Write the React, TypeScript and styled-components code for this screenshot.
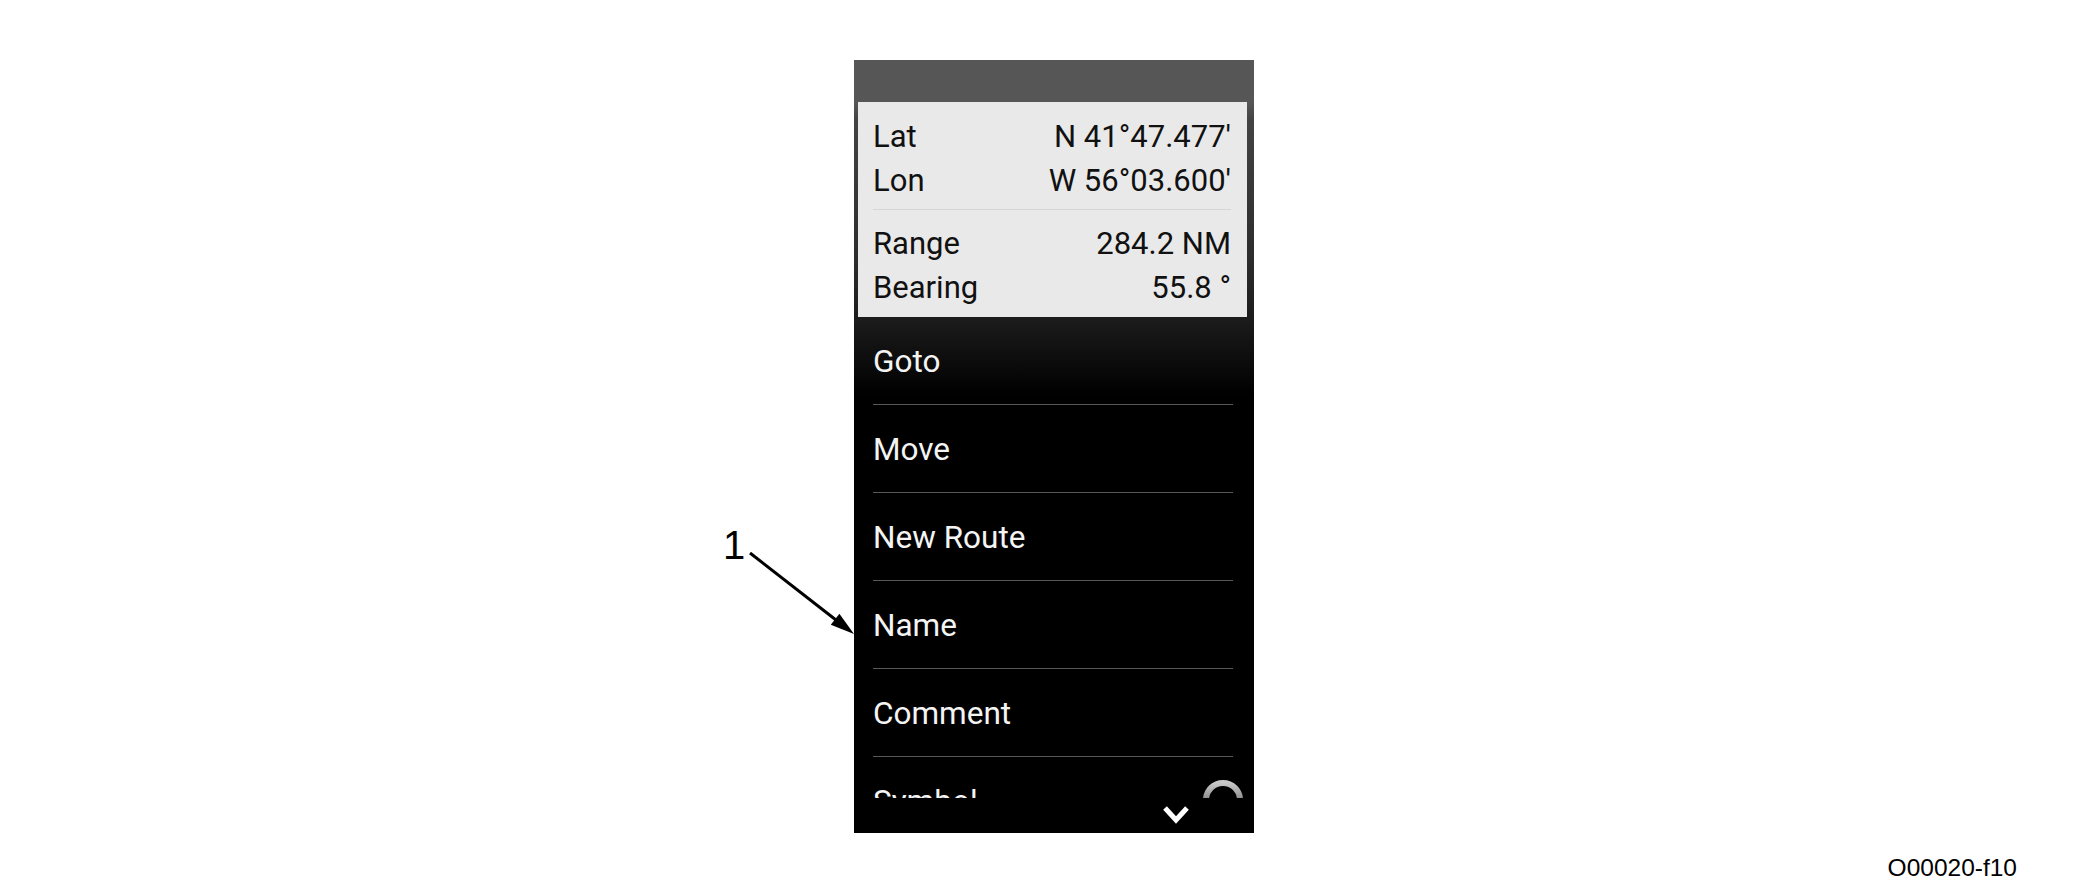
import React from "react";
import styled, { createGlobalStyle } from "styled-components";

const GlobalStyle = createGlobalStyle`
  html, body { margin: 0; padding: 0; background: #ffffff; }
  body { font-family: "Liberation Sans", Arial, sans-serif; }
`;

const Page = styled.div`
  width: 2100px;
  height: 895px;
  display: flex;
  flex-direction: column;
  background: #ffffff;
  overflow: hidden;
`;

const Stage = styled.div`
  display: flex;
  padding: 60px 0 0 854px;
`;

const PanelFrame = styled.div`
  position: relative;
`;

const Panel = styled.div`
  width: 400px;
  height: 773px;
  display: flex;
  flex-direction: column;
  background: linear-gradient(
    to bottom,
    #565656 0px,
    #565656 42px,
    #434343 60px,
    #2c2c2c 200px,
    #1c1c1c 258px,
    #000000 335px,
    #000000 100%
  );
  font-family: Roboto, "Noto Sans", sans-serif;
  overflow: hidden;
`;

const Header = styled.div`
  height: 42px;
  flex: 0 0 42px;
`;

const InfoBox = styled.div`
  margin: 0 7px 0 4px;
  padding: 13px 16px 7px 15px;
  background: #e9e9e9;
  color: #111111;
`;

const InfoRow = styled.div`
  display: flex;
  justify-content: space-between;
  height: 44px;
  line-height: 44px;
  font-size: 31px;
  white-space: nowrap;
`;

const InfoDivider = styled.div`
  height: 1px;
  margin: 6px 0 12px;
  background: #d6d6d6;
`;

const MenuList = styled.div`
  flex: 0 0 481px;
  height: 481px;
  overflow: hidden;
  display: flex;
  flex-direction: column;
`;

const MenuItem = styled.div`
  flex: 0 0 88px;
  box-sizing: border-box;
  height: 88px;
  margin: 0 21px 0 19px;
  padding-top: 3px;
  display: flex;
  align-items: center;
  border-bottom: 1px solid #575757;
  color: #f4f4f4;
  font-size: 31.5px;
  line-height: 84px;
`;

const MenuLabel = styled.span`
  flex: 1;
  white-space: nowrap;
`;

const Ring = styled.svg`
  flex: 0 0 40px;
  align-self: flex-start;
  margin-top: 20px;
  margin-right: -10px;
`;

const BottomBar = styled.div`
  flex: 1;
  display: flex;
  justify-content: flex-end;
  align-items: flex-start;
  padding: 7px 64px 0 0;
`;

const CalloutLabel = styled.span`
  position: absolute;
  left: -131px;
  top: 465px;
  font-family: "Liberation Sans", Arial, sans-serif;
  font-size: 40px;
  line-height: 1;
  color: #000000;
`;

const CalloutArrow = styled.svg`
  position: absolute;
  left: -114px;
  top: 480px;
  overflow: visible;
`;

const Caption = styled.div`
  align-self: flex-end;
  margin-top: 21px;
  padding-right: 83px;
  font-family: "Liberation Sans", Arial, sans-serif;
  font-size: 24.5px;
  line-height: 28px;
  color: #000000;
`;

const info = [
  [
    ["Lat", "N 41°47.477′"],
    ["Lon", "W 56°03.600′"],
  ],
  [
    ["Range", "284.2 NM"],
    ["Bearing", "55.8 °"],
  ],
];

const menu = ["Goto", "Move", "New Route", "Name", "Comment", "Symbol"];

export default function App() {
  return (
    <>
      <GlobalStyle />
      <Page>
        <Stage>
          <PanelFrame>
            <Panel>
              <Header />
              <InfoBox>
                {info.map((group, gi) => (
                  <React.Fragment key={gi}>
                    {gi > 0 && <InfoDivider />}
                    {group.map(([k, v]) => (
                      <InfoRow key={k}>
                        <span>{k}</span>
                        <span>{v}</span>
                      </InfoRow>
                    ))}
                  </React.Fragment>
                ))}
              </InfoBox>
              <MenuList>
                {menu.map((m) => (
                  <MenuItem key={m}>
                    <MenuLabel>{m}</MenuLabel>
                    {m === "Symbol" && (
                      <Ring width="40" height="40" viewBox="0 0 40 40">
                        <defs>
                          <linearGradient id="ringGrad" x1="0" y1="0" x2="0" y2="1">
                            <stop offset="0" stopColor="#c8c8c8" />
                            <stop offset="0.5" stopColor="#8a8a8a" />
                            <stop offset="1" stopColor="#555555" />
                          </linearGradient>
                        </defs>
                        <circle cx="20" cy="20" r="17" fill="none" stroke="url(#ringGrad)" strokeWidth="6" />
                      </Ring>
                    )}
                  </MenuItem>
                ))}
              </MenuList>
              <BottomBar>
                <svg width="28" height="19" viewBox="0 0 28 19">
                  <polyline
                    points="3,3 14,15 25,3"
                    fill="none"
                    stroke="#ffffff"
                    strokeWidth="5"
                    strokeLinejoin="miter"
                  />
                </svg>
              </BottomBar>
            </Panel>
            <CalloutLabel>1</CalloutLabel>
            <CalloutArrow width="120" height="100" viewBox="0 0 120 100">
              <line x1="10" y1="13" x2="96" y2="80" stroke="#000" strokeWidth="3" />
              <polygon points="114,94 90.8,84.7 99.4,73.7" fill="#000" />
            </CalloutArrow>
          </PanelFrame>
        </Stage>
        <Caption>O00020-f10</Caption>
      </Page>
    </>
  );
}
